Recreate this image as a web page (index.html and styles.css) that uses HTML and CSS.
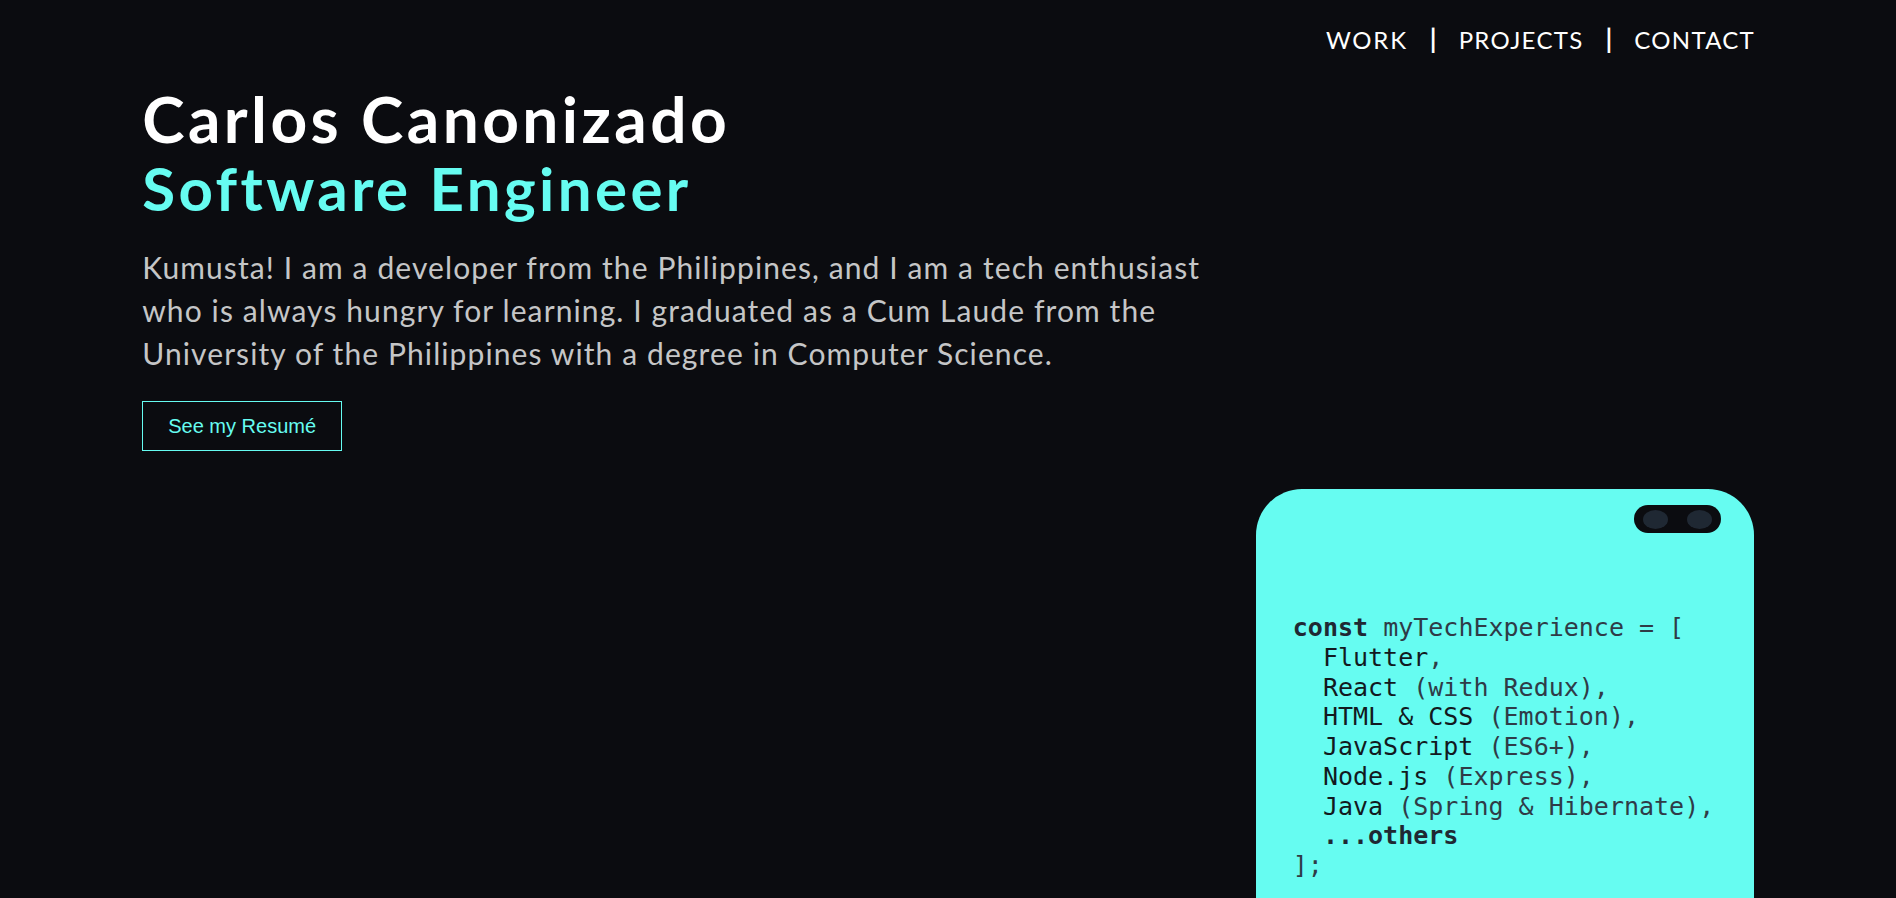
FILE: index.html
```html
<!DOCTYPE html>
<html lang="en">
<head>
<meta charset="utf-8">
<title>Carlos Canonizado</title>
<link rel="stylesheet" href="styles.css">
</head>
<body>
<div class="page">
  <header class="site-header">
    <nav class="nav">
      <a class="nav-link" href="#work">WORK</a>
      <span class="nav-sep">|</span>
      <a class="nav-link" href="#projects">PROJECTS</a>
      <span class="nav-sep">|</span>
      <a class="nav-link" href="#contact">CONTACT</a>
    </nav>
  </header>
  <main class="hero">
    <section class="intro">
      <h1 class="name">Carlos Canonizado</h1>
      <h2 class="role">Software Engineer</h2>
      <p class="bio">Kumusta! I am a developer from the Philippines, and I am a tech enthusiast<br>who is always hungry for learning. I graduated as a Cum Laude from the<br>University of the Philippines with a degree in Computer Science.</p>
      <a class="resume-btn" href="#resume">See my Resumé</a>
    </section>
    <div class="phone-row">
      <div class="phone">
        <div class="camera-bar">
          <div class="camera"><span class="lens"></span><span class="lens"></span></div>
        </div>
<pre class="code"><span class="kw">const</span> <span class="lt">myTechExperience = [</span>
  <span class="md">Flutter</span><span class="lt">,</span>
  <span class="md">React</span> <span class="lt">(with Redux),</span>
  <span class="md">HTML &amp; CSS</span> <span class="lt">(Emotion),</span>
  <span class="md">JavaScript</span> <span class="lt">(ES6+),</span>
  <span class="md">Node.js</span> <span class="lt">(Express),</span>
  <span class="md">Java</span> <span class="lt">(Spring &amp; Hibernate),</span>
  <span class="kw">...others</span>
<span class="lt">];</span></pre>
      </div>
    </div>
  </main>
</div>
</body>
</html>
```

FILE: styles.css
```css
html, body {
  margin: 0;
  padding: 0;
  height: 100%;
  background: #0B0C10;
  overflow: hidden;
}

body {
  font-family: Lato, "Noto Sans", sans-serif;
  color: #ffffff;
}

.page {
  width: 85%;
  margin: 0 auto;
}

.site-header {
  padding-top: 25px;
}

.nav {
  display: flex;
  justify-content: flex-end;
  align-items: center;
  line-height: 29px;
}

.nav-link {
  color: #ffffff;
  text-decoration: none;
  font-size: 24px;
  letter-spacing: 1.3px;
}

.nav-link:first-child {
  letter-spacing: 1.8px;
}

.nav-link:last-child {
  margin-right: -1.3px;
}

.nav-sep {
  font-size: 26px;
  font-weight: 700;
  margin: 0 22px;
  color: #ffffff;
}

.hero {
  padding-top: 33px;
}

.intro {
  display: flex;
  flex-direction: column;
  align-items: flex-start;
}

.name {
  margin: 0;
  font-size: 64px;
  line-height: 64px;
  font-weight: 700;
  letter-spacing: 3.4px;
  color: #ffffff;
}

.role {
  margin: 0;
  font-size: 60px;
  line-height: 75px;
  font-weight: 700;
  letter-spacing: 3.4px;
  color: #66FCF1;
}

.bio {
  margin: 20px 0 0;
  font-size: 30px;
  line-height: 43px;
  color: #C5C6C7;
  letter-spacing: 1.1px;
}

.resume-btn {
  margin-top: 26px;
  display: inline-block;
  border: 1px solid #66FCF1;
  padding: 12px 25px;
  font-family: "Liberation Sans", Arial, sans-serif;
  font-size: 20px;
  line-height: 24px;
  color: #66FCF1;
  text-decoration: none;
}

.phone-row {
  display: flex;
  justify-content: flex-end;
  margin-top: 38px;
}

.phone {
  width: 498px;
  height: 560px;
  background: #66FCF1;
  border-radius: 46px 46px 0 0;
  display: flex;
  flex-direction: column;
}

.camera-bar {
  display: flex;
  justify-content: flex-end;
  padding: 16px 33px 0 0;
}

.camera {
  display: flex;
  align-items: center;
  gap: 19px;
  height: 28px;
  padding: 0 9px;
  border-radius: 14px;
  background: #0B0C10;
}

.lens {
  width: 25px;
  height: 19px;
  border-radius: 50%;
  background: #1F2833;
}

.code {
  margin: 80px 0 0;
  padding-left: 37px;
  font-family: "DejaVu Sans Mono", "Liberation Mono", monospace;
  font-size: 25px;
  line-height: 29.75px;
  color: #1F2833;
}

.code .kw {
  font-weight: 700;
}

.code .md {
  color: #121920;
}

.code .lt {
  color: #2f3b47;
}
```
